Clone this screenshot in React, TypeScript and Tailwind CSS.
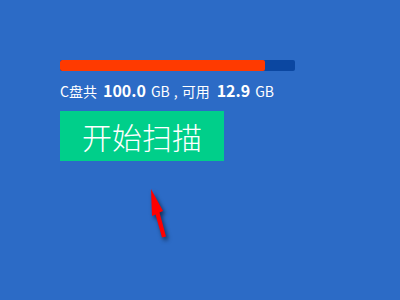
import React from 'react';

export default function App() {
  const total = 100.0;
  const free = 12.9;
  const used = ((total - free) / total) * 100;

  return (
    <div className="w-[400px] h-[300px] bg-[#2c6bc6] pt-[60px] pl-[60px]" style={{ fontFamily: '"Noto Sans CJK SC", "Liberation Sans", sans-serif' }}>
      {/* Disk usage bar */}
      <div className="w-[235px] h-[11px] bg-[#0b47a1] rounded-[2px] overflow-hidden">
        <div className="h-full bg-[#ff3a00] rounded-[2px]" style={{ width: `${used}%` }} />
      </div>

      <div className="mt-[9px] text-white text-[14px] leading-[20px] flex items-baseline">
        <span>C盘共</span>
        <span className="ml-[6px] text-[16px] font-bold">100.0</span>
        <span className="ml-[5px]">GB</span>
        <span className="ml-[4px]">,</span>
        <span className="ml-[4px]">可用</span>
        <span className="ml-[7px] text-[16px] font-bold">12.9</span>
        <span className="ml-[5px]">GB</span>
      </div>

      <button className="mt-[10px] w-[164px] h-[50px] bg-[#00cf8a] text-white text-[30px] font-light flex items-center justify-center">
        开始扫描
      </button>

      {/* Pointer arrow */}
      <svg width="40" height="64" viewBox="0 0 40 64" className="ml-[80px] mt-[19px] drop-shadow-[2px_3px_2px_rgba(0,0,0,0.55)]">
        <polygon points="11,9 23,31 19.5,32.5 26,56.5 22,57.5 15.5,34.5 12,36" fill="#ff0000" />
      </svg>
    </div>
  );
}
